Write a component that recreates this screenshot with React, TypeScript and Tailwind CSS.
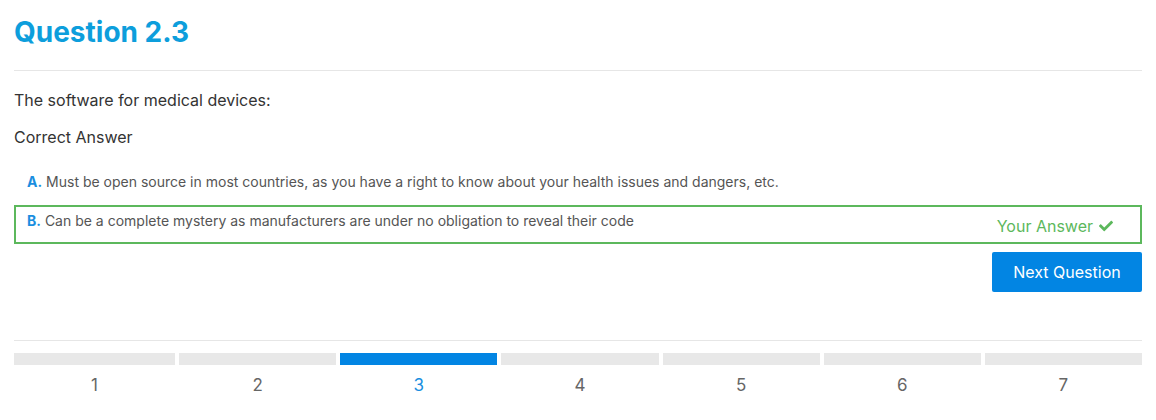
const steps = [1, 2, 3, 4, 5, 6, 7];

function CheckIcon() {
  return (
    <svg viewBox="0 0 512 512" className="h-[14px] w-[14px]" fill="currentColor">
      <path d="M173.9 439.4l-166.4-166.4c-10-10-10-26.2 0-36.2l36.2-36.2c10-10 26.2-10 36.2 0L192 312.7 432.1 72.6c10-10 26.2-10 36.2 0l36.2 36.2c10 10 10 26.2 0 36.2L210.1 439.4c-10 10-26.2 10-36.2 0z" />
    </svg>
  );
}

export default function App() {
  const current = 3;

  return (
    <div className="bg-white px-[14px] font-['Inter',sans-serif] w-[1156px] h-[420px]">
      <h1 className="pt-[14px] text-[28px] leading-[36px] font-bold text-[#0d9edc]">
        Question 2.3
      </h1>
      <hr className="mt-[20px] border-t border-[#e6e6e6]" />

      <p className="mt-[18px] text-[16px] leading-[22px] text-[#333]">
        The software for medical devices:
      </p>
      <p className="mt-[15px] text-[16px] leading-[22px] text-[#333]">Correct Answer</p>

      <div className="mt-[24px] pl-[13px] text-[14px] leading-5 text-[#555]">
        <span className="font-bold text-[#1a8ee0]">A.</span> Must be open source in most
        countries, as you have a right to know about your health issues and dangers, etc.
      </div>

      <div className="mt-[13px] flex h-[39px] justify-between border-2 border-[#5cb85c] pl-[11px] pr-[27px]">
        <div className="pt-[4px] text-[14px] leading-5 text-[#555]">
          <span className="font-bold text-[#1a8ee0]">B.</span> Can be a complete mystery as
          manufacturers are under no obligation to reveal their code
        </div>
        <div className="flex items-center gap-[6px] self-end pb-[4px] text-[16px] leading-6 text-[#5cb85c]">
          Your Answer
          <CheckIcon />
        </div>
      </div>

      <div className="mt-[8px] flex justify-end">
        <button className="h-[40px] w-[150px] rounded-[2px] bg-[#0285e3] text-[16px] text-white">
          Next Question
        </button>
      </div>

      <hr className="mt-[48px] border-t border-[#e6e6e6]" />

      <div className="mt-[12px] grid grid-cols-[161px_repeat(6,1fr)] gap-x-[4px]">
        {steps.map((n) => (
          <div key={n} className="flex flex-col items-center">
            <div
              className={
                n === current ? 'h-[12px] w-full bg-[#0285e3]' : 'h-[12px] w-full bg-[#e8e8e8]'
              }
            />
            <span
              className={
                n === current
                  ? 'mt-[8px] text-[17px] leading-6 text-[#1a8ee0]'
                  : 'mt-[8px] text-[17px] leading-6 text-[#666]'
              }
            >
              {n}
            </span>
          </div>
        ))}
      </div>
    </div>
  );
}
